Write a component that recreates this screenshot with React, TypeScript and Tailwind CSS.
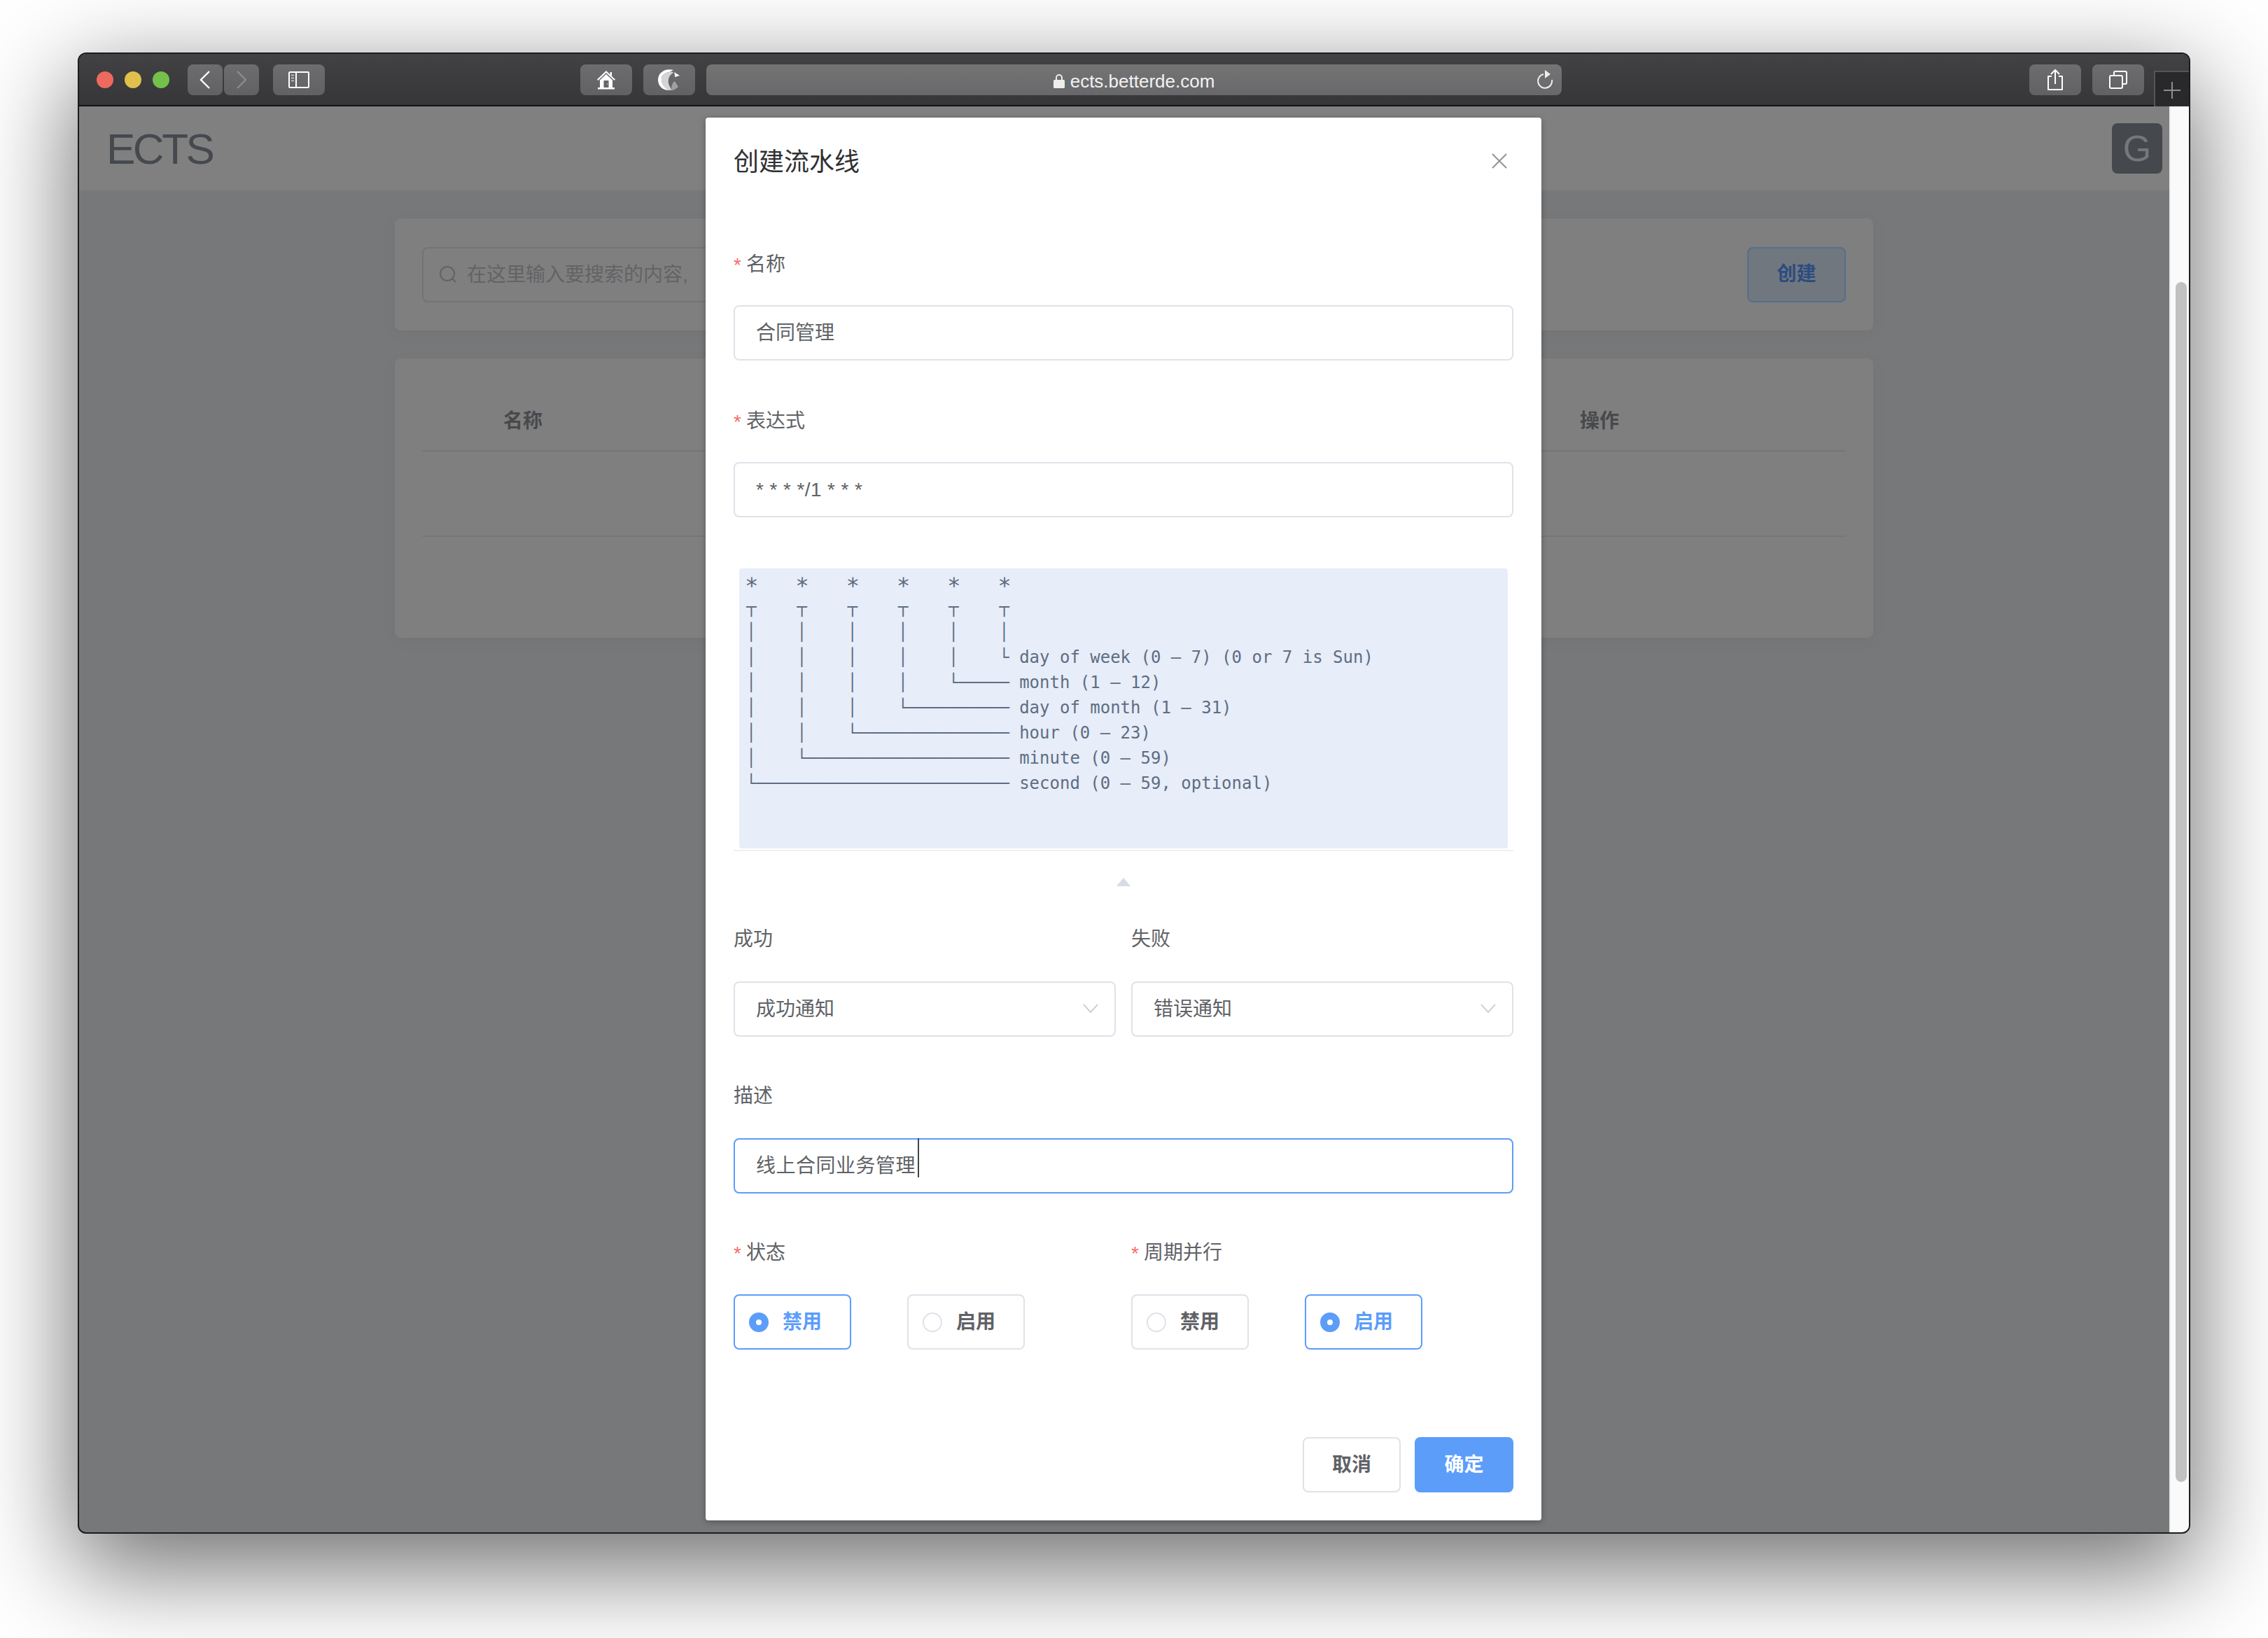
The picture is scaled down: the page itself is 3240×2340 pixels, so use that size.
const sans = "font-['Liberation_Sans','Noto_Sans_CJK_SC',sans-serif]";

const Btn = ({ w, children }: { w: string; children: React.ReactNode }) => (
  <div className={`${w} h-[44px] rounded-[8px] bg-gradient-to-b from-[#6d6d6f] to-[#616163] flex items-center justify-center shrink-0`}>{children}</div>
);

const Label = ({ req, children }: { req?: boolean; children: React.ReactNode }) => (
  <div className="h-[28px] leading-[28px] text-[28px] text-[#606266] flex items-center">
    {req && <span className="text-[#f56c6c] mr-[7px] leading-[28px] relative top-[1px]">*</span>}
    {children}
  </div>
);

const Input = ({ focus, children }: { focus?: boolean; children: React.ReactNode }) => (
  <div className={`h-[79px] rounded-[8px] border-2 bg-white flex items-center pl-[30px] pr-[20px] text-[28px] text-[#606266] relative ${focus ? "border-[#5c9dfa]" : "border-[#dfe2e8]"}`}>
    {children}
  </div>
);

const Chevron = () => (
  <svg width="22" height="13" viewBox="0 0 22 13" className="absolute right-[23px] top-[30px]" fill="none" stroke="#c0c4cc" strokeWidth="1.6">
    <path d="M1 1l10 11L21 1" />
  </svg>
);

const Radio = ({ on, label }: { on?: boolean; label: string }) => (
  <div className={`w-[168px] h-[79px] rounded-[8px] border-2 flex items-center pl-[20px] text-[28px] font-bold ${on ? "border-[#5c9dfa] text-[#5c9dfa]" : "border-[#dfe2e8] text-[#606266]"}`}>
    {on ? (
      <span className="w-[28px] h-[28px] rounded-full border-[10px] border-[#5c9dfa] bg-white mr-[20px] shrink-0" />
    ) : (
      <span className="w-[28px] h-[28px] rounded-full border-2 border-[#dfe2e8] mr-[20px] shrink-0" />
    )}
    {label}
  </div>
);

const code = `┬    ┬    ┬    ┬    ┬    ┬
│    │    │    │    │    │
│    │    │    │    │    └ day of week (0 – 7) (0 or 7 is Sun)
│    │    │    │    └───── month (1 – 12)
│    │    │    └────────── day of month (1 – 31)
│    │    └─────────────── hour (0 – 23)
│    └──────────────────── minute (0 – 59)
└───────────────────────── second (0 – 59, optional)`;

export default function App() {
  return (
    <div className={`w-[3240px] h-[2340px] bg-white pt-[75px] pl-[111px] overflow-hidden ${sans}`}>
      <div className="relative w-[3018px] h-[2116px] rounded-[12px] border-2 border-[#1c1c1c] shadow-[0_44px_140px_8px_rgba(0,0,0,0.56)] flex flex-col overflow-hidden bg-[#77787a]">
        {/* title bar */}
        <div className="h-[75px] shrink-0 bg-gradient-to-b from-[#424244] to-[#363638] border-b-2 border-[#111] flex items-start pt-[15px] pl-[25px] relative">
          <span className="w-[24px] h-[24px] rounded-full bg-[#ee6a5e] mt-[10px]" />
          <span className="w-[24px] h-[24px] rounded-full bg-[#e0c04c] mt-[10px] ml-[16px]" />
          <span className="w-[24px] h-[24px] rounded-full bg-[#74c04b] mt-[10px] ml-[16px]" />
          <div className="ml-[26px] flex gap-[2px]">
            <Btn w="w-[50px]">
              <svg width="16" height="26" viewBox="0 0 16 26" fill="none" stroke="#fff" strokeWidth="2.4"><path d="M14 1L2 13l12 12" /></svg>
            </Btn>
            <Btn w="w-[50px]">
              <svg width="16" height="26" viewBox="0 0 16 26" fill="none" stroke="#8c8c8e" strokeWidth="2.4"><path d="M2 1l12 12L2 25" /></svg>
            </Btn>
          </div>
          <div className="ml-[20px]">
            <Btn w="w-[74px]">
              <svg width="30" height="24" viewBox="0 0 30 24" fill="none" stroke="#fff" strokeWidth="2">
                <rect x="1" y="1" width="28" height="22" rx="1.5" />
                <path d="M11 1v22" />
                <path d="M4 5.5h4M4 9.5h4M4 13.5h4" strokeWidth="1.6" stroke="#cfcfcf" />
              </svg>
            </Btn>
          </div>
          <div className="ml-[365px]">
            <Btn w="w-[74px]">
              <svg width="28" height="28" viewBox="0 0 28 28" fill="#fff">
                <path d="M14 1L1 13.500l1.500 1.600L14 4l11.500 11.100 1.500-1.600L22 9V3h-2.500v3.500z" />
                <path d="M5 14.500L14 6l9 8.500V25H5z" />
                <rect x="2" y="25" width="24" height="2.500" />
                <rect x="10.500" y="15" width="7" height="10" fill="#666668" />
                <rect x="15" y="19.500" width="1" height="1" fill="#fff" />
              </svg>
            </Btn>
          </div>
          <div className="ml-[16px]">
            <Btn w="w-[74px]">
              <svg width="32" height="32" viewBox="0 0 32 32">
                <path d="M16 31C7 31 0 25 0 16 0 6 10-1 22 2l-6 3C10 6 6 9 5 13c-1 7 4 15 11 18z" fill="#fff" />
                <path d="M16 5C10 6 6 9 5 13c-1 7 4 15 11 18 2 0 3 0 3-1-1-3-3-5-4-9-1-6 1-12 7-15 0-1-3-2-6-1z" fill="#d4d4d4" />
                <path d="M23 5l8 5-7 2c0-2 0-4-1-7z" fill="#fff" />
                <path d="M24 18l5 8c-3 3-7 5-10 5 0-5 1-11 5-13z" fill="#a0a0a0" />
              </svg>
            </Btn>
          </div>
          <div className="ml-[16px] w-[1222px] h-[44px] rounded-[8px] bg-gradient-to-b from-[#747475] to-[#68686a] flex items-center justify-center relative text-[26px] text-[#f2f2f2] shrink-0">
            <svg width="16" height="21" viewBox="0 0 16 21" className="mr-[8px] mt-[2px]" fill="#eee">
              <path d="M3 9V6a5 5 0 0110 0v3h-2V6a3 3 0 00-6 0v3z" />
              <rect x="0" y="9" width="16" height="12" rx="1.500" />
            </svg>
            <span className="relative top-[2px]">ects.betterde.com</span>
            <svg width="24" height="28" viewBox="0 0 24 28" className="absolute right-[11px] top-[7px]" fill="none" stroke="#eee" strokeWidth="2">
              <path d="M9 7A10 10 0 1021 15" />
              <path d="M11 1l8 6-8 6z" fill="#eee" stroke="none" />
            </svg>
          </div>
          <div className="ml-[668px]">
            <Btn w="w-[74px]">
              <svg width="24" height="32" viewBox="0 0 24 32" fill="none" stroke="#fff" strokeWidth="2">
                <path d="M7 11H2v19h20V11h-5" strokeLinejoin="round" />
                <path d="M12 22V2M6 8l6-6 6 6" />
              </svg>
            </Btn>
          </div>
          <div className="ml-[16px]">
            <Btn w="w-[74px]">
              <svg width="26" height="26" viewBox="0 0 26 26" fill="none" stroke="#fff" strokeWidth="2">
                <rect x="1" y="7" width="18" height="18" rx="2" />
                <path d="M7 7V3a2 2 0 012-2h14a2 2 0 012 2v14a2 2 0 01-2 2h-4" />
              </svg>
            </Btn>
          </div>
          <div className="absolute right-0 top-[24px] w-[50px] h-[51px] bg-[#29292b] border-l-2 border-t-2 border-[#555] flex items-center justify-center">
            <svg width="24" height="24" viewBox="0 0 24 24" stroke="#8e8e8e" strokeWidth="2" className="mt-[2px]"><path d="M12 0v24M0 12h24" /></svg>
          </div>
        </div>

        {/* page under backdrop */}
        <div className="flex-1 flex min-h-0">
          <div className="flex-1 flex flex-col min-w-0">
            <div className="h-[120px] shrink-0 bg-[#808080] flex items-center justify-between pl-[39px] pr-[10px]">
              <span className="text-[62px] leading-none text-[#45494e] tracking-[-3.5px] relative top-[1px]">ECTS</span>
              <span className="w-[72px] h-[72px] rounded-[8px] bg-[#45484d] text-[#76777a] text-[52px] flex items-center justify-center">G</span>
            </div>
            <div className="w-[2112px] ml-[451px] mt-[40px]">
              <div className="h-[160px] rounded-[8px] bg-[#7f7f7f] px-[39px] flex items-center justify-between shadow-[0_4px_24px_rgba(0,0,0,0.04)]">
                <div className="w-[900px] h-[79px] rounded-[8px] border-2 border-[#727377] flex items-center pl-[22px] text-[28px] text-[#626366] gap-[14px]">
                  <svg width="26" height="26" viewBox="0 0 26 26" fill="none" stroke="#626366" strokeWidth="2"><circle cx="12" cy="12" r="10" /><path d="M19 19l5 5" /></svg>
                  <span className="relative top-[1px]">在这里输入要搜索的内容,</span>
                </div>
                <div className="w-[141px] h-[79px] rounded-[8px] border-2 border-[#566e8f] bg-[#71777e] text-[#2c4c80] font-bold text-[28px] flex items-center justify-center">创建</div>
              </div>
              <div className="mt-[40px] h-[399px] rounded-[8px] bg-[#7f7f7f] px-[39px] shadow-[0_4px_24px_rgba(0,0,0,0.04)]">
                <div className="h-[133px] border-b-2 border-[#767679] flex items-end justify-between pb-[20px] text-[28px] font-bold text-[#48494c]">
                  <span className="ml-[116px]">名称</span>
                  <span className="mr-[324px]">操作</span>
                </div>
                <div className="h-[122px] border-b-2 border-[#767679]" />
              </div>
            </div>
          </div>
          {/* scrollbar */}
          <div className="w-[28px] shrink-0 bg-[#fafafa] border-l-2 border-[#eeeeee] relative">
            <div className="absolute left-[7px] top-[251px] w-[16px] h-[1714px] rounded-full bg-[#c1c1c1]" />
          </div>
        </div>

        {/* modal */}
        <div className="absolute left-[895px] top-[91px] w-[1194px] h-[2004px] bg-white rounded-[4px] shadow-[0_2px_8px_rgba(0,0,0,0.3)] px-[40px] flex flex-col text-[#303133]">
          <div className="h-[36px] mt-[46px] text-[36px] leading-[36px] flex items-center justify-between">
            <span>创建流水线</span>
            <svg width="22" height="22" viewBox="0 0 22 22" stroke="#909399" strokeWidth="2" className="mr-[9px] relative top-[-2px]"><path d="M1 1l20 20M21 1L1 21" /></svg>
          </div>
          <div className="mt-[114px]"><Label req>名称</Label></div>
          <div className="mt-[44px]"><Input>合同管理</Input></div>
          <div className="mt-[73px]"><Label req>表达式</Label></div>
          <div className="mt-[44px]"><Input><span className="tracking-[0.4px]">* * * */1 * * *</span></Input></div>
          <div className="mt-[73px] border-b-2 border-[#eef0f6] pb-[2px]">
            <pre className="mx-[8px] h-[400px] rounded-[4px] bg-[#e7edf9] pl-[10px] pt-[1px] text-[24px] leading-[36px] text-[#5e6d82] font-['DejaVu_Sans_Mono',monospace] overflow-hidden">
              <span className="flex h-[36px] ml-[-2px] text-[32px]">
                {[0, 1, 2, 3, 4, 5].map((i) => (
                  <span key={i} className="w-[72.25px] shrink-0">∗</span>
                ))}
              </span>
              {code}
            </pre>
          </div>
          <div className="h-[36px] flex items-center justify-center">
            <svg width="20" height="12" viewBox="0 0 20 12" fill="#d6dbe6" className="mt-[52px]"><path d="M10 0l10 12H0z" /></svg>
          </div>
          <div className="mt-[76px] grid grid-cols-2 gap-x-[22px]">
            <Label>成功</Label>
            <Label>失败</Label>
          </div>
          <div className="mt-[46px] grid grid-cols-2 gap-x-[22px]">
            <Input>成功通知<Chevron /></Input>
            <Input>错误通知<Chevron /></Input>
          </div>
          <div className="mt-[71px]"><Label>描述</Label></div>
          <div className="mt-[46px]">
            <Input focus>
              <span className="tracking-[0.5px]">线上合同业务管理</span>
              <span className="absolute left-[261px] top-[-2px] w-[2px] h-[56px] bg-[#444]" />
            </Input>
          </div>
          <div className="mt-[71px] grid grid-cols-2 gap-x-[22px]">
            <Label req>状态</Label>
            <Label req>周期并行</Label>
          </div>
          <div className="mt-[45px] grid grid-cols-2 gap-x-[22px]">
            <div className="flex gap-[80px]">
              <Radio on label="禁用" />
              <Radio label="启用" />
            </div>
            <div className="flex gap-[80px]">
              <Radio label="禁用" />
              <Radio on label="启用" />
            </div>
          </div>
          <div className="mt-[125px] flex justify-end gap-[20px]">
            <div className="w-[140px] h-[79px] rounded-[8px] border-2 border-[#dfe2e8] text-[#606266] font-bold text-[28px] flex items-center justify-center">取消</div>
            <div className="w-[141px] h-[79px] rounded-[8px] bg-[#5c9dfa] text-white font-bold text-[28px] flex items-center justify-center">确定</div>
          </div>
        </div>
      </div>
    </div>
  );
}
